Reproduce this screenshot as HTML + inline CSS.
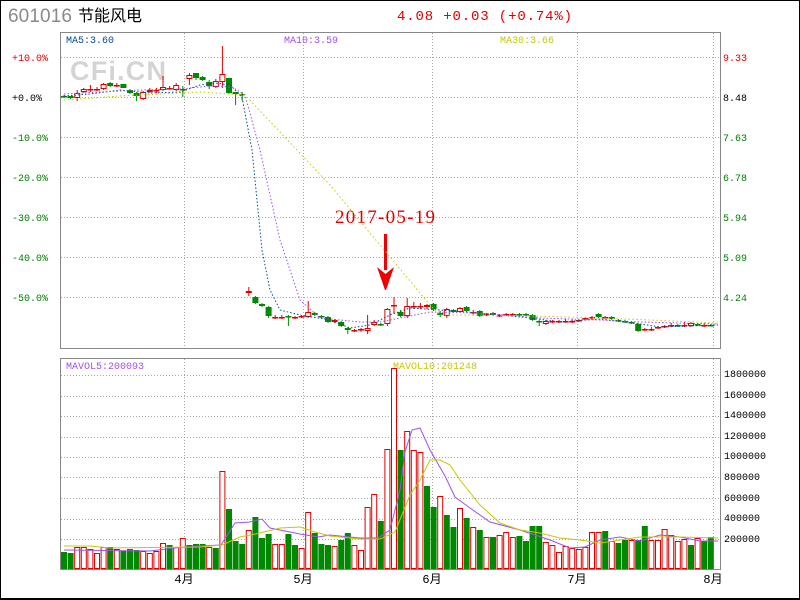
<!DOCTYPE html>
<html><head><meta charset="utf-8"><style>
html,body{margin:0;padding:0;background:#fff;}
svg{display:block;}
text{font-family:"Liberation Mono","Noto Sans CJK SC",monospace;}
</style></head><body>
<svg id="s" width="800" height="600" viewBox="0 0 800 600" xmlns="http://www.w3.org/2000/svg">
<rect x="0.5" y="0.5" width="799" height="598" fill="#fff" stroke="#000"/>
<line x1="0" y1="599" x2="800" y2="599" stroke="#000" stroke-width="2"/>
<text x="8" y="22" font-size="19" fill="#8a8a8a" style="font-family:'Liberation Sans',sans-serif" textLength="64">601016</text>
<text x="78" y="21" font-size="16" fill="#000" style="font-family:'Liberation Sans','Noto Sans CJK SC',sans-serif">节能风电</text>
<text x="397" y="20" font-size="14" fill="#e00000" textLength="175">4.08 +0.03 (+0.74%)</text>
<text x="70" y="80" font-size="27" font-weight="bold" fill="#d4d4d4" style="font-family:'Liberation Sans',sans-serif" textLength="96">CFi.CN</text>
<g id="grid" stroke="#a8a8a8" stroke-dasharray="1,2" fill="none"></g>
<rect x="60.5" y="32.5" width="660" height="316" fill="none" stroke="#888"/>
<rect x="60.5" y="358.5" width="660" height="211" fill="none" stroke="#888"/>
<g font-size="10">
<text x="66" y="43" fill="#004c9b">MA5:3.60</text>
<text x="284" y="43" fill="#a050f0">MA10:3.59</text>
<text x="500" y="43" fill="#c8c800">MA30:3.66</text>
<text x="12" y="61" fill="#e00000">+10.0%</text>
<text x="12" y="101" fill="#000">+0.0%</text>
<text x="12" y="141" fill="#008000">-10.0%</text>
<text x="12" y="181" fill="#008000">-20.0%</text>
<text x="12" y="221" fill="#008000">-30.0%</text>
<text x="12" y="261" fill="#008000">-40.0%</text>
<text x="12" y="301" fill="#008000">-50.0%</text>
<text x="723" y="61" fill="#e00000">9.33</text>
<text x="723" y="101" fill="#000">8.48</text>
<text x="723" y="141" fill="#008000">7.63</text>
<text x="723" y="181" fill="#008000">6.78</text>
<text x="723" y="221" fill="#008000">5.94</text>
<text x="723" y="261" fill="#008000">5.09</text>
<text x="723" y="301" fill="#008000">4.24</text>
<text x="66" y="369" fill="#a050f0">MAVOL5:200093</text>
<text x="393" y="369" fill="#c8c800">MAVOL10:201248</text>
<text x="724" y="377" fill="#000">1800000</text>
<text x="724" y="398" fill="#000">1600000</text>
<text x="724" y="418" fill="#000">1400000</text>
<text x="724" y="439" fill="#000">1200000</text>
<text x="724" y="459" fill="#000">1000000</text>
<text x="724" y="480" fill="#000">800000</text>
<text x="724" y="501" fill="#000">600000</text>
<text x="724" y="521" fill="#000">400000</text>
<text x="724" y="542" fill="#000">200000</text>
</g>
<g font-size="12" fill="#000" text-anchor="middle" style="font-family:'Liberation Sans','Noto Sans CJK SC',sans-serif">
<text x="184" y="583">4月</text><text x="303" y="583">5月</text><text x="432" y="583">6月</text><text x="577" y="583">7月</text><text x="713" y="583">8月</text>
</g>
<g id="c"></g>
<text x="335" y="223" font-size="19" fill="#e00000" textLength="100" style="font-family:'Liberation Serif',serif">2017-05-19</text>
<rect x="384" y="234" width="3" height="36" fill="#f00000"/>
<polygon points="377,267 385.5,274 394,267 386,290 385,290" fill="#f00000"/>
</svg>
<script>
var NS="http://www.w3.org/2000/svg",s=document.getElementById('s'),g=document.getElementById('grid'),cg=document.getElementById('c');
function el(p,t,a){var e=document.createElementNS(NS,t);for(var k in a)e.setAttribute(k,a[k]);p.appendChild(e);return e;}
[57,97,137,177,217,257,297].forEach(function(y){el(g,'line',{x1:61,x2:720,y1:y+.5,y2:y+.5});});
[375,396,416,437,457,477,498,519,539].forEach(function(y){el(g,'line',{x1:61,x2:720,y1:y+.5,y2:y+.5});});
[184,303,432,577,713].forEach(function(x){el(g,'line',{x1:x+.5,x2:x+.5,y1:33,y2:348});el(g,'line',{x1:x+.5,x2:x+.5,y1:359,y2:569});});
var C="g 96 97 95 98|g 96 98 96 99|r 93 98 90 101|r 89 92 88 93|r 89 90 85 92|r 89 90 87 91|r 84 89 83 90|g 83 86 82 87|r 85 86 83 87|g 84 88 84 88|g 90 93 89 94|g 93 96 92 101|r 92 99 91 100|r 90 92 88 93|r 90 91 88 93|r 87 90 76 91|r 88 89 86 90|r 85 90 83 91|g 89 90 86 97|r 75 79 73 85|g 73 78 73 80|g 77 80 76 81|g 82 86 80 89|r 81 87 79 88|r 74 82 46 88|g 78 93 78 94|g 92 94 92 105|g 94 95 92 101|r 291 293 287 296|g 297 303 296 304|g 304 306 303 307|g 307 316 306 318|r 317 318 315 319|r 317 318 315 319|g 316 317 315 326|r 317 318 316 319|r 316 317 315 318|r 312 317 301 318|g 313 315 312 316|g 316 317 315 318|g 317 322 316 323|r 320 322 319 323|g 322 326 321 327|g 328 330 327 334|r 330 331 329 332|r 329 330 328 332|r 328 331 315 334|r 322 325 320 326|g 324 325 323 326|r 309 324 308 326|r 305 306 297 313|g 312 316 310 317|r 306 316 298 318|r 306 307 302 309|r 306 307 303 309|r 305 307 304 309|g 304 309 303 311|g 313 315 311 317|r 309 316 308 318|g 310 312 309 313|r 308 312 307 313|g 307 311 306 312|r 312 313 310 315|g 311 316 310 317|r 314 315 313 316|g 313 315 312 316|r 315 316 314 317|r 314 315 313 316|r 314 315 313 316|g 314 315 313 316|g 314 315 313 316|g 315 320 314 321|g 321 322 320 326|r 321 324 320 325|r 321 322 320 323|r 321 322 320 323|r 321 322 319 323|r 321 322 319 323|r 320 321 319 322|r 318 319 317 320|r 317 318 316 320|g 314 317 313 318|r 317 318 316 319|g 317 319 316 320|g 320 321 319 322|g 321 322 320 323|g 322 323 321 324|g 324 331 323 332|r 329 330 328 331|r 329 330 327 331|r 327 328 326 329|r 326 327 325 328|r 325 326 323 327|g 325 326 324 327|r 325 326 322 327|r 323 326 322 327|g 324 325 323 326|r 325 326 323 327|g 325 326 324 326".split('|');
var V="g552 g553 r547 r547 r549 r553 r547 g547 r549 g551 g549 g550 r551 r553 r551 r543 g545 r547 r538 g545 g544 g544 r547 g548 r471 g509 g541 g544 r530 g517 g538 g534 r544 r544 g534 g545 r548 r512 g533 g544 g545 r546 g540 g533 r545 r550 r507 r494 g521 r449 r368 g450 r431 r450 r452 g486 g507 r496 g515 g527 r508 g518 r527 g530 r537 g537 r535 r532 r537 g536 g541 g526 g526 r542 r545 r552 r546 r548 r549 r547 r532 r532 g531 r541 g543 g540 r540 g540 g526 r540 r540 r529 r535 r541 r539 g545 r538 g541 g537".split(' ');
function line(pts,col,dash,w){el(s,'polyline',{points:pts,fill:'none',stroke:col,'stroke-width':w||1,'stroke-dasharray':dash||'none'});}
C.forEach(function(r,i){var a=r.split(' '),x=64+6.6*i,t=+a[1],b=+a[2],h=+a[3],l=+a[4],red=a[0]=='r',col=red?'#e00000':'#008800';
el(cg,'line',{x1:x,x2:x,y1:h,y2:l,stroke:col});
if(b-t<1.5)el(cg,'rect',{x:x-3,y:t,width:6,height:1.5,fill:col});
else if(red)el(cg,'rect',{x:x-2.5,y:t+.5,width:5,height:b-t-1,fill:'#fff',stroke:col});
else el(cg,'rect',{x:x-3,y:t,width:6,height:b-t,fill:col});});
V.forEach(function(v,i){var x=64+6.6*i,t=+v.slice(1);
if(v[0]=='r')el(cg,'rect',{x:x-2.5,y:t+.5,width:5,height:569-t-1,fill:'#fff',stroke:'#e00000'});
else el(cg,'rect',{x:x-3,y:t,width:6,height:569-t,fill:'#008800'});});
line("64,96 90,94 120,90 150,93 180,92 200,85 215,83 230,85 242,97 252,150 262,250 270,290 280,310 300,315 330,320 350,328 370,325 390,315 410,308 440,310 480,313 530,318 560,322 600,319 640,324 660,327 718,325","#004c9b","1.5,2");
line("64,94 100,92 140,90 180,89 210,86 232,87 245,95 260,150 280,240 300,300 320,318 360,322 380,322 400,318 430,312 480,313 540,318 600,320 640,322 718,324","#a050f0","1.5,2");
line("64,100 120,96 200,92 245,95 330,185 430,305 440,315 480,315 530,316 600,318 650,320 718,323","#c8c800","1.5,2.5");
line("64,550 150,551 175,548 200,546 221,545 235,523 250,522 262,519 270,528 300,534 318,537 330,535 360,538 378,538 390,530 400,490 405,452 412,430 420,428 430,450 445,476 455,497 470,508 490,522 520,530 550,540 570,548 585,547 600,540 620,537 640,541 660,535 680,537 700,541 718,541","#a050f0");
line("64,546 90,546 110,548 200,547 222,545 240,537 260,533 280,528 300,527 315,532 330,536 360,539 380,539 395,532 410,495 420,480 430,460 440,460 450,465 460,480 480,505 500,523 520,530 540,533 560,538 580,540 600,543 620,540 640,537 680,537 718,538","#c8c800");
</script>
</body></html>
